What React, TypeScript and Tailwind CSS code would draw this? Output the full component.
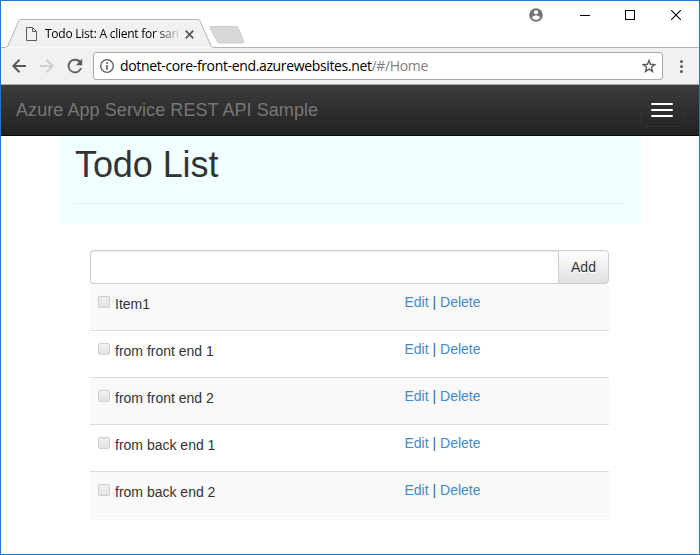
import React from "react";

const items = ["Item1", "from front end 1", "from front end 2", "from back end 1", "from back end 2"];

function TitleBar() {
  return (
    <div className="relative flex h-[47px] shrink-0 items-start">
      <svg className="absolute left-0 top-0" width="698" height="47" viewBox="1 1 698 47" fill="none">
        <path d="M1 47.5H5.5Q7 47.5 7.8 46L19 20.5Q19.4 19.5 20.5 19.5H198Q199.200 19.500 199.800 20.500L211.200 46Q212 47.500 213.500 47.500H699" fill="#f1f1f1" stroke="#b3b3b3" />
        <path d="M211.500 26.500H236Q237.500 26.500 238 27.500L243.500 41Q244 43 242.500 43H219.500Q218 43 217.300 41.500L210.300 28.500Q209.500 26.500 211.500 26.500Z" fill="#d8d8d8" stroke="#c9c9c9" />
      </svg>
      <div className="relative ml-[25px] mt-[25px] flex h-4 w-[172px] items-center">
        <svg width="11" height="14" viewBox="0 0 11 14" fill="none" stroke="#5a5a5a" className="shrink-0">
          <path d="M.5.5H6.500L10.500 4.500V13.500H.5ZM6.500.5V4.500H10.500" />
        </svg>
        <span className="ml-[8px] w-[133px] whitespace-nowrap bg-linear-to-r from-black from-84% to-[#00000020] bg-clip-text font-['Open_Sans',sans-serif] text-[12px] leading-4 tracking-[-0.24px] text-transparent">
          Todo List: A client for san
        </span>
        <svg width="9" height="9" viewBox="0 0 9 9" stroke="#5a5a5a" strokeWidth="1.800" className="ml-[7px] shrink-0">
          <path d="M.7.7 8.300 8.300M8.300.7.7 8.300" />
        </svg>
      </div>
      <div className="ml-auto flex h-7 items-center">
        <svg width="14" height="14" viewBox="0 0 14 14" className="mr-[37px]">
          <circle cx="7" cy="7" r="6.800" fill="#737373" />
          <circle cx="7" cy="4.300" r="2.100" fill="#fff" />
          <path d="M2.900 9.800C3.300 8 5.500 7.500 7 7.500S10.700 8 11.100 9.800C10 11.300 8.700 11.900 7 11.900S4 11.300 2.900 9.800Z" fill="#fff" />
        </svg>
        <div className="mr-[35px] h-px w-[10px] bg-black" />
        <div className="mr-[36px] size-[10px] border border-black" />
        <svg width="10" height="10" viewBox="0 0 10 10" stroke="#000" strokeWidth="1.100" className="mr-[18px]">
          <path d="M0 0 10 10M10 0 0 10" />
        </svg>
      </div>
    </div>
  );
}

function Toolbar() {
  return (
    <div className="flex h-[37px] shrink-0 items-center border-b border-[#a9a9a9] bg-[#f1f1f1] pl-[10px] pr-[16px]">
      <svg width="16" height="16" viewBox="0 0 16 16" fill="none" stroke="#5a5a5a" strokeWidth="2">
        <path d="M15 8H2.500M8.500 1.800 2.300 8 8.500 14.200" />
      </svg>
      <svg width="16" height="16" viewBox="0 0 16 16" fill="none" stroke="#d0d0d0" strokeWidth="2" className="ml-[12px]">
        <path d="M1 8H13.500M7.500 1.800 13.700 8 7.500 14.200" />
      </svg>
      <svg width="16" height="16" viewBox="2 2 20 20" className="ml-[12px]" fill="#5a5a5a">
        <path d="M18.800 5.200A9.500 9.500 0 0 0 12 2.900 9.100 9.100 0 1 0 20.700 14.500H18.200A6.700 6.700 0 1 1 12 5.400C13.900 5.400 15.500 6.200 16.700 7.400L13 11H21V3Z" />
      </svg>
      <div className="ml-[10px] flex h-7 w-[570px] items-center rounded-[3px] border border-[#a9a9a9] bg-white pl-[6px] pr-[6px]">
        <svg width="14" height="14" viewBox="0 0 14 14" fill="none" stroke="#5a5a5a">
          <circle cx="7" cy="7" r="6.300" strokeWidth="1.300" />
          <path d="M7 3.300V4.900M7 6.100V10.700" strokeWidth="1.600" />
        </svg>
        <span className="ml-[6px] whitespace-nowrap font-['Open_Sans',sans-serif] text-[14px] leading-5 tracking-[-0.355px] text-black">
          dotnet-core-front-end.azurewebsites.net<span className="text-[#808080]">/#/Home</span>
        </span>
        <svg width="14" height="14" viewBox="0 0 14 14" fill="none" stroke="#5a5a5a" strokeWidth="1.400" className="ml-auto">
          <path d="M7 1.500 8.500 5.300 12.700 5.600 9.500 8.300 10.500 12.400 7 10.200 3.500 12.400 4.500 8.300 1.300 5.600 5.500 5.300Z" />
        </svg>
      </div>
      <div className="ml-auto flex flex-col gap-[2px]">
        <i className="size-[3px] rounded-full bg-[#5a5a5a]" />
        <i className="size-[3px] rounded-full bg-[#5a5a5a]" />
        <i className="size-[3px] rounded-full bg-[#5a5a5a]" />
      </div>
    </div>
  );
}

function Navbar() {
  return (
    <nav className="flex h-[51px] shrink-0 items-center justify-between border-b border-[#080808] bg-linear-to-b from-[#3c3c3c] to-[#222222] pl-[15px] pr-[15px]">
      <span className="text-[18px] leading-5 tracking-[0.07px] text-[#777777]">Azure App Service REST API Sample</span>
      <button className="flex h-[34px] w-11 flex-col items-center justify-center gap-1 rounded border border-[#333333]">
        <span className="h-[2px] w-[22px] rounded-[1px] bg-white" />
        <span className="h-[2px] w-[22px] rounded-[1px] bg-white" />
        <span className="h-[2px] w-[22px] rounded-[1px] bg-white" />
      </button>
    </nav>
  );
}

function TodoRow({ text }: { text: string }) {
  return (
    <li className="flex h-[47px] border-t border-[#dddddd] pl-2 pt-[8px] odd:bg-[#f9f9f9] first:h-[46px] first:border-t-0">
      <div className="flex w-[306.5px]">
        <span className="mt-[4px] size-[12px] shrink-0 rounded-[2px] border border-[#cfcfcf] bg-linear-to-b from-[#f0f0f0] to-[#e2e2e2]" />
        <span className="ml-[5px] mt-[2px] leading-5">{text}</span>
      </div>
      <div className="leading-5 text-[#428bca]">
        <a>Edit</a> <span className="text-[#2a6496]">|</span> <a>Delete</a>
      </div>
    </li>
  );
}

export default function App() {
  return (
    <div className="flex h-[555px] w-[700px] flex-col overflow-hidden border border-[#1979ca] bg-white font-['Liberation_Sans',Arial,sans-serif] text-[14px] text-[#333333]">
      <TitleBar />
      <Toolbar />
      <Navbar />
      <main>
        <header className="ml-[58px] h-[88px] w-[582px] bg-[#f0ffff] px-[15px] pt-[9px]">
          <h1 className="h-[59px] border-b border-[#e7eeee] pl-px text-[36px] leading-10 tracking-[-0.08px]">Todo List</h1>
        </header>
        <section className="ml-[87px] mt-[25px] w-[523px] rounded border border-transparent px-px shadow-[0_1px_1px_rgba(0,0,0,0.05)]">
          <div className="flex h-[34px]">
            <input className="w-[468px] rounded-l border border-r-0 border-[#cccccc] bg-white shadow-[inset_0_1px_1px_rgba(0,0,0,0.075)] outline-none" />
            <button className="flex-1 rounded-r border border-[#cccccc] bg-linear-to-b from-white to-[#e0e0e0] leading-5 [text-shadow:0_1px_0_#fff]">Add</button>
          </div>
          <ul>
            {items.map((text) => (
              <TodoRow key={text} text={text} />
            ))}
          </ul>
        </section>
      </main>
    </div>
  );
}
